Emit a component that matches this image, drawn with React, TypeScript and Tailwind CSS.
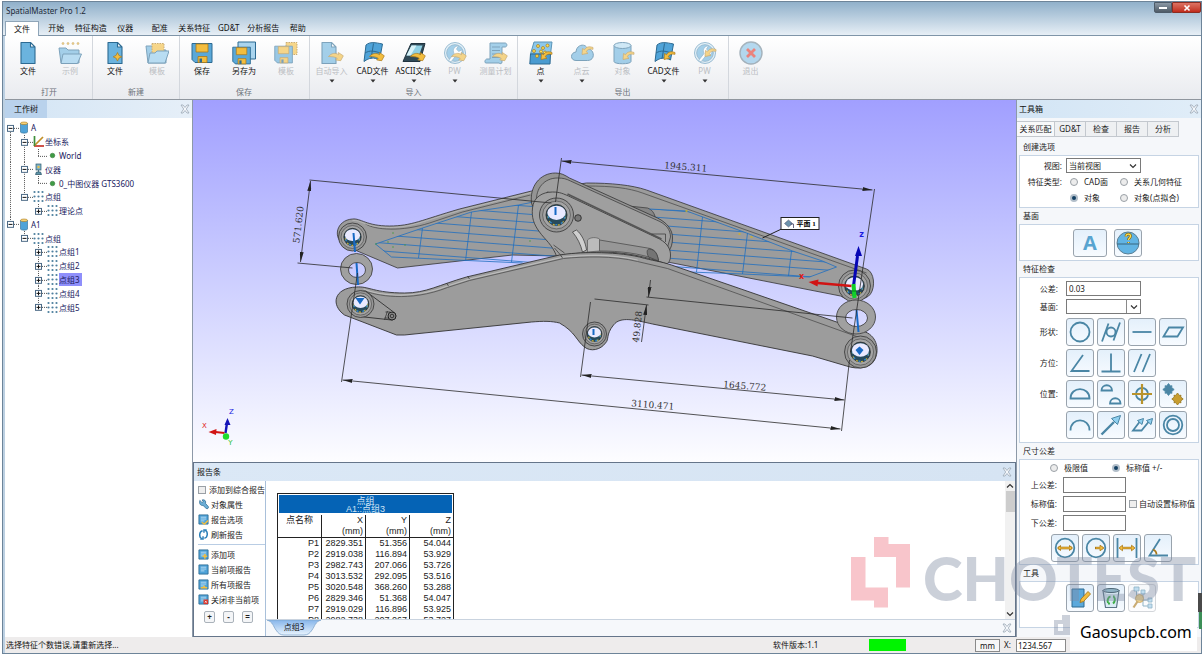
import React, { ReactNode } from "react";

const B = "#6bb3de";
const D = "#2c6a92";
const G = "#f3bd3e";
const GD = "#a9781a";

type Kids = { children?: ReactNode };

const Icon24 = ({ children }: Kids) => (
  <svg viewBox="0 0 24 24" className="h-6 w-6" fill="none" strokeLinejoin="round" aria-hidden="true">
    {children}
  </svg>
);

const OutArrow = () => (
  <path d="M8.500 14.500c3-3.500 7-4 10-1.800l-.2-2.200 5 3.300-2.600 4.900-5-.8 1.500-1.600c-2.500-1.700-5-1.500-8.700-1.800z" fill={G} stroke={GD} strokeWidth=".7" transform="translate(0 1)" />
);
const InArrow = () => (
  <path d="M23 9.500c-4-1.500-7-.5-8.500 2.200l-2-1.200-.5 6 6-1.200-1.800-1.600c1.200-2.300 3-3 6.800-2.400z" fill={G} stroke={GD} strokeWidth=".7" transform="translate(0 2)" />
);

const Doc = () => <path d="M5 1.500h9.500l4.500 4.500v16.500H5z M14.500 1.500V6H19" fill={B} stroke={D} strokeWidth="1.100" />;
const Floppy = () => (
  <>
    <path d="M2 2.500h20v19H5l-3-3z" fill="#5aa8d8" stroke={D} />
    <path d="M6 3h12v8H6z" fill={G} stroke={GD} strokeWidth=".8" />
    <path d="M8 15.500h9v6H8z" fill={G} stroke={GD} strokeWidth=".8" />
    <path d="M9.500 17.500h2.500v4H9.500z" fill={D} />
  </>
);
const Flag = () => (
  <>
    <path d="M5 4c4-3.500 9-2.500 16.500-1l-3 16c-6-3-10-2.500-15.500 1.500z" fill="#4fa3d8" stroke={D} />
    <path d="M12.500 2.500 10 18M4 12c5-3 9-2 15.500 0" stroke={D} />
  </>
);
const Wrench = () => (
  <>
    <circle cx="12" cy="12" r="10.500" fill="#d4e9f5" stroke="#5b94b8" />
    <circle cx="12" cy="12" r="8.300" fill="#6bb3de" stroke="#5b94b8" />
    <path d="M5.500 19.500 11 12.500c-2-4 .8-7.800 4.500-7.700l-2 3.400 2.300 2.200 3.300-1.600c.5 3.600-2.600 6.600-6.100 5.800l-5 6.300z" fill="#fff" stroke="#5b94b8" strokeWidth=".8" />
  </>
);

const icons: Record<string, ReactNode> = {
  doc: <Doc />,
  sample: (
    <>
      {[4, 9, 14, 19].map((x) => (
        <circle key={x} cx={x + 1} cy="2.500" r="1" fill={G} stroke={GD} strokeWidth=".6" />
      ))}
      <path d="M1 7h7l2 2h11v13H3z" fill={B} stroke={D} />
      <path d="M5 13h18.500L19.500 22.500H3z" fill="#8fcbee" stroke={D} />
    </>
  ),
  docNew: (
    <>
      <Doc />
      <path d="M14.500 11.500l1.400 2.900 2.900 1.400-2.900 1.400-1.400 2.900-1.400-2.900-2.900-1.400 2.900-1.400z" fill={G} stroke={GD} strokeWidth=".7" />
    </>
  ),
  folderTpl: (
    <>
      <path d="M1 5h7v4h13v13H3z" fill={B} stroke={D} />
      <path d="M7 2.500h12v10H7z" fill={G} stroke={GD} strokeDasharray="1.500 1" />
      <path d="M5 12h5l2-2h12l-4 12H3z" fill="#8fcbee" stroke={D} />
    </>
  ),
  save: <Floppy />,
  saveAs: (
    <>
      <path d="M6 1h17.500v17H6z" fill="#a9d4ee" stroke={D} />
      <g transform="translate(-1 4) scale(.88)">
        <Floppy />
      </g>
    </>
  ),
  saveTpl: (
    <>
      <path d="M12 1.500h11v12H12z" fill={G} stroke={GD} strokeDasharray="1.500 1" />
      <g transform="translate(-1 3) scale(.88)">
        <Floppy />
      </g>
    </>
  ),
  autoIn: (
    <>
      <g transform="translate(-3 0)">
        <Doc />
      </g>
      <OutArrow />
    </>
  ),
  cadIn: (
    <>
      <Flag />
      <OutArrow />
    </>
  ),
  asciiIn: (
    <>
      <path d="M9 2.500h14l-5 18H1z" fill="#2f4957" stroke="#20333f" />
      <path d="M9.500 4.500h11l-3.500 10H4.500z" fill="#8fd0e4" />
      <path d="M9.500 4.500h5l-6 10h-4z" fill="#d8f2f8" />
      <OutArrow />
    </>
  ),
  pwIn: (
    <>
      <Wrench />
      <OutArrow />
    </>
  ),
  plan: (
    <>
      <path d="M6 2h15c2.500 0 2.500 4 0 4h-3v15c0 2-2 2-3 1H2c-2 0-1-4 1-4h3z" fill={B} stroke={D} />
      <path d="M8 6h8M8 9.500h8M8 13h8M8 16.500h8" stroke={D} />
      <OutArrow />
    </>
  ),
  points: (
    <>
      <path d="M5 1h18l-1.500 12H1.500z" fill="#8cc8ea" stroke="#5b94b8" />
      <path d="M1.500 13h20l-.5 10H.8z" fill="#4a9bd0" stroke="#2c6a92" />
      {[
        [9, 5],
        [14, 7],
        [18.500, 4.500],
        [5, 10],
        [12, 10.500],
        [8, 15],
        [16, 11.500],
      ].map(([x, y]) => (
        <circle key={x + "-" + y} cx={x} cy={y} r="1.500" fill="#ffe14f" stroke={GD} strokeWidth=".7" />
      ))}
      <InArrow />
    </>
  ),
  cloud: (
    <>
      <path d="M6 19.500c-6 0-6-8 0-8.500C6.500 3 16 2 17.500 8c7-.5 8.500 11.500 0 11.500z" fill={B} stroke={D} />
      <g transform="translate(0 -5)">
        <InArrow />
      </g>
    </>
  ),
  object: (
    <>
      <path d="M3 4.500v16c0 3 17 3 17 0v-16" fill={B} stroke={D} />
      <ellipse cx="11.500" cy="4.500" rx="8.500" ry="3" fill="#b2dbf2" stroke={D} />
      <InArrow />
    </>
  ),
  cadOut: (
    <>
      <Flag />
      <InArrow />
    </>
  ),
  pwOut: (
    <>
      <Wrench />
      <g transform="translate(0 -3)">
        <InArrow />
      </g>
    </>
  ),
  exit: (
    <>
      <circle cx="12" cy="12" r="11" fill="#86c1e6" stroke="#6d8493" strokeWidth="1.400" />
      <path d="M8 8l8 8M16 8l-8 8" stroke="#e2352a" strokeWidth="2.800" />
    </>
  ),
};

type Item = { icon: string; label: string; off?: boolean; more?: boolean };
const ribbon: { name: string; pad: string; items: Item[] }[] = [
  { name: "打开", pad: "pl-0.5 pr-px", items: [{ icon: "doc", label: "文件" }, { icon: "sample", label: "示例", off: true }] },
  { name: "新建", pad: "px-px", items: [{ icon: "docNew", label: "文件" }, { icon: "folderTpl", label: "模板", off: true }] },
  {
    name: "保存",
    pad: "pl-px pr-0.5",
    items: [
      { icon: "save", label: "保存" },
      { icon: "saveAs", label: "另存为" },
      { icon: "saveTpl", label: "模板", off: true },
    ],
  },
  {
    name: "导入",
    pad: "px-px",
    items: [
      { icon: "autoIn", label: "自动导入", off: true, more: true },
      { icon: "cadIn", label: "CAD文件", more: true },
      { icon: "asciiIn", label: "ASCII文件", more: true },
      { icon: "pwIn", label: "PW", off: true, more: true },
      { icon: "plan", label: "测量计划", off: true },
    ],
  },
  {
    name: "导出",
    pad: "pl-0.5 pr-[3px]",
    items: [
      { icon: "points", label: "点", more: true },
      { icon: "cloud", label: "点云", off: true, more: true },
      { icon: "object", label: "对象", off: true },
      { icon: "cadOut", label: "CAD文件", more: true },
      { icon: "pwOut", label: "PW", off: true, more: true },
    ],
  },
  { name: "", pad: "px-px", items: [{ icon: "exit", label: "退出", off: true }] },
];

const Ribbon = () => (
  <div className="flex h-16 shrink-0 border-b border-[#8f969e] bg-linear-to-b from-white to-[#e9ebef]">
    {ribbon.map((g, i) => (
      <div key={i} className={"flex flex-col pt-[5px] pb-px " + g.pad + (i < 5 ? " border-r border-[#d3d7dd]" : "")}>
        <div className="flex flex-1">
          {g.items.map((it, k) => (
            <button key={k} disabled={it.off} className={i > 2 ? "flex w-[41px] flex-col items-center" : "flex w-[42px] flex-col items-center"}>
              <span className={it.off ? "opacity-60" : ""}>
                <Icon24>{icons[it.icon]}</Icon24>
              </span>
              <span className={it.off ? "leading-3 whitespace-nowrap text-[#bbbec3]" : "leading-3 whitespace-nowrap text-[#111]"}>{it.label}</span>
              {it.more && (
                <svg viewBox="0 0 6 4" className="mt-0.5 h-1 w-1.5" aria-hidden="true">
                  <path d="M.5 .5h5L3 3.500z" fill="#333" />
                </svg>
              )}
            </button>
          ))}
        </div>
        <div className="h-3 text-center leading-3 text-[#6c727a]">{g.name}</div>
      </div>
    ))}
  </div>
);

const PanelX = () => (
  <button aria-label="关闭" className="flex">
    <svg viewBox="0 0 10 10" className="h-2.5 w-2.5" fill="#f6f9fc" stroke="#9aa7b5" strokeWidth=".8" aria-hidden="true">
      <path d="M1 1h2l2 2.500L7 1h2L6.300 5 9 9H7L5 6.500 3 9H1l2.700-4z" />
    </svg>
  </button>
);

/* ---------- work tree ---------- */

const dash = { stroke: "#555", strokeDasharray: "1 1", strokeWidth: 1 };
const Cell = ({ t }: { t: string }) => (
  <svg viewBox="0 0 14 14" preserveAspectRatio="none" className="h-full w-3.5 shrink-0" fill="none" aria-hidden="true">
    {"vmpt".includes(t) && <path d={t === "t" ? "M5.500 7v7" : "M5.500 0v14"} {...dash} />}
    {"eMPE".includes(t) && <path d="M5.500 0v7" {...dash} />}
    {"mpMPteE".includes(t) && <path d="M5 7.500h9" {...dash} />}
    {"mpMPt".includes(t) && (
      <>
        <rect x="2.500" y="4.500" width="6" height="6" fill="#fff" stroke="#4c6a86" />
        <path d={t === "p" || t === "P" ? "M3.500 7.500h4M5.500 5.500v4" : "M3.500 7.500h4"} stroke="#111" />
      </>
    )}
  </svg>
);

const treeIcons: Record<string, ReactNode> = {
  db: (
    <>
      <path d="M1.500 2v9c0 1.500 7 1.500 7 0V2" fill="#4fa3d8" stroke="#2c6a92" strokeWidth=".6" />
      <ellipse cx="5" cy="2.300" rx="3.500" ry="1.300" fill="#f6d27a" stroke="#a9781a" strokeWidth=".6" />
    </>
  ),
  axes: (
    <>
      <path d="M1 11h10" stroke="#c8342b" strokeWidth="1.700" />
      <path d="M1 11 10 2" stroke="#c2902a" strokeWidth="1.700" />
      <path d="M1.500 1v10" stroke="#3f8f3c" strokeWidth="1.700" />
    </>
  ),
  scanner: (
    <>
      <rect x="3" y="1" width="5" height="6" fill="#7fb3c8" stroke="#2f5a6e" strokeWidth=".7" />
      <path d="M5.500 7v2M2.500 11.500l1-2.500h4l1 2.500z" fill="#5f94a8" stroke="#2f5a6e" strokeWidth=".8" />
      <circle cx="5.500" cy="4" r="1.200" fill="#e8c14d" />
    </>
  ),
  bullet: <circle cx="5.500" cy="6.500" r="2.300" fill="#3f9b45" stroke="#2a6d2f" strokeWidth=".5" />,
  dots: (
    <>
      {[1.5, 5.5, 9.5].map((x) =>
        [2, 6.5, 11].map((y) => <circle key={x + "," + y} cx={x} cy={y} r="1.100" fill="#4d7f9e" />)
      )}
    </>
  ),
};

const tree: [string, string, string][] = [
  ["t", "db", "A"],
  ["vm", "axes", "坐标系"],
  ["vve", "bullet", "World"],
  ["vm", "scanner", "仪器"],
  ["vve", "bullet", "0_中图仪器 GTS3600"],
  ["vM", "dots", "点组"],
  ["v P", "dots", "理论点"],
  ["M", "db", "A1"],
  [" M", "dots", "点组"],
  ["  p", "dots", "点组1"],
  ["  p", "dots", "点组2"],
  ["  p", "dots", "点组3"],
  ["  p", "dots", "点组4"],
  ["  P", "dots", "点组5"],
];

const WorkTree = () => (
  <aside className="flex w-[188px] shrink-0 flex-col border-r border-[#8d99a8] bg-white">
    <div className="flex h-[18px] items-center justify-between bg-linear-to-r from-[#d3e5f5] to-[#e6eff8] pr-0.5">
      <h2 className="flex h-full w-[42px] items-center justify-center bg-[#b9d2ec] text-[#111]">工作树</h2>
      <PanelX />
    </div>
    <ul className="mt-[3px] grid h-[193px] auto-rows-fr text-[#20205e]">
      {tree.map(([cells, icon, label], i) => (
        <li key={i} className="flex min-h-0 items-center">
          {cells.split("").map((c, k) => (
            <Cell key={k} t={c} />
          ))}
          <svg viewBox="0 0 12 13" className="h-[13px] w-3 shrink-0" aria-hidden="true">
            {treeIcons[icon]}
          </svg>
          <span className={label === "点组3" ? "bg-[#8f8ffb] pr-0.5 leading-[13px] whitespace-nowrap" : "leading-[13px] whitespace-nowrap"}>{label}</span>
        </li>
      ))}
    </ul>
  </aside>
);

/* ---------- 3D view ---------- */

const Bore = ({ x, y, r }: { x: number; y: number; r: number }) => (
  <g>
    <circle cx={x} cy={y} r={r} fill="#969696" stroke="#333" strokeWidth=".8" />
    <circle cx={x} cy={y} r={r * 0.82} fill="#a4a4a4" stroke="#444" strokeWidth=".6" />
    <circle cx={x} cy={y} r={r * 0.62} fill="#274a5c" stroke="#222" strokeWidth=".7" />
    <circle cx={x} cy={y + r * 0.1} r={r * 0.5} fill="none" stroke="#c8b23a" strokeWidth="1.200" strokeDasharray="2 3" />
    <circle cx={x} cy={y + r * 0.1} r={r * 0.48} fill="none" stroke="#2f86c9" strokeWidth="1.500" strokeDasharray="2 4" />
    <ellipse cx={x} cy={y - r * 0.13} rx={r * 0.54} ry={r * 0.42} fill="#e9e9ff" />
  </g>
);

const Viewport = () => (
  <div className="min-h-0 flex-1 bg-linear-to-b from-[#a19fff] to-[#fdfdff]">
    <svg viewBox="194 100 822 362" className="h-full w-full" fill="none" role="img" aria-label="三维视图">
      <defs>
        <marker id="arr" viewBox="0 0 10 4" refX="10" refY="2" markerWidth="10" markerHeight="4" markerUnits="userSpaceOnUse" orient="auto-start-reverse">
          <path d="M0 0 10 2 0 4z" fill="#222" />
        </marker>
        <clipPath id="hatchL">
          <path d="M376 244 423 228 472 212 519 205 545 200 562 256 523 263 392 257z" />
        </clipPath>
        <clipPath id="hatchR">
          <path d="M650 209 687 211 747 233 793 251 823 261 837 267 810 277 743 274 690 272 655 258z" />
        </clipPath>
      </defs>

      {/* rear arm */}
      <path
        d="M353 219c8-1 14 7 37 7 22 0 32-6 70-17l72-18 55-8c25 0 45 2 60 7l220 79c8 3 9 18 4 25-4 6-20 9-30 2L668 262l-110-6-45-1-115 13-52-22c-14-8-9-26 7-27z"
        fill="#9c9c9c"
        stroke="#333"
        strokeWidth=".8"
      />
      <path d="M366 224c10 6 36 8 64-1l33-11 68-17M587 186c26 0 42 2 56 7l224 80" stroke="#444" strokeWidth=".7" />
      <path d="M353 219c8-1 14 7 37 7 22 0 32-6 70-17l72-18" stroke="#b8b8b8" strokeWidth=".9" transform="translate(0 1.500)" />
      <path d="M610 204 648 208c6 2 8 8 8 12" stroke="#333" strokeWidth=".7" fill="#858585" />
      <g stroke="#1f6fc0" strokeWidth=".8">
        <path d="M376 244 423 228 472 212 519 205 534 202M376 244l16 13 131 6M650 209l37 2 60 22 46 18 30 10 14 6-27 10-67-3-53-2" />
        <path d="M423 228l-4 30M472 212l-6 49M519 205l-7 57M703 217l-6 55M748 233l-5 41M792 251l-3 25" />
        <g clipPath="url(#hatchL)">
          {[0, 1, 2, 3, 4, 5, 6, 7].map((i) => (
            <path key={i} d={`M370 ${194 + i * 8}l195 15`} />
          ))}
        </g>
        <g clipPath="url(#hatchR)">
          {[0, 1, 2, 3, 4, 5, 6, 7, 8].map((i) => (
            <path key={i} d={`M640 ${200 + i * 8}l200 15`} />
          ))}
        </g>
      </g>
      <path d="M376 244h1M393 247h1M405 245h1M393 233h1M388 242h1M530 241h1" stroke="#3e9b3a" strokeWidth="1.300" />
      <path d="M686 211h2M739 234h2M751 237h2" stroke="#d1b31f" strokeWidth="1.300" />
      <Bore x={353} y={237} r={14} />
      <Bore x={855} y={286} r={16} />

      {/* link plates */}
      <path
        d="M532 203c-2-16 8-30 24-30 6 0 9 2 14 5l88 40c10 5 15 12 15 20 0 12-6 17-12 17l-90-35-38-14z"
        fill="#949494"
        stroke="#333"
        strokeWidth=".8"
      />
      <path d="M537 202c-1-14 8-24 21-24 6 0 9 1 13 3l86 39c10 4 14 10 14 17l-3 10-100-50-20-5z" fill="#9f9f9f" stroke="#333" strokeWidth=".7" />
      <path
        d="M533 208c1-11 10-16 20-16 8 0 11 2 16 4l91 43c9 5 11 11 11 16 0 6-2 8-4 9-22-8-42-12-67-12-15 0-28 2-43 4-4-11-12-17-17-24-6-8-8-15-7-24z"
        fill="#a0a0a0"
        stroke="#333"
        strokeWidth=".8"
      />
      <path d="M568 194l94 45" stroke="#555" strokeWidth="1.400" />
      <path d="M652 234h14v8" stroke="#333" strokeWidth=".7" />
      <path d="M600 240l48 8c7 1 9 4 11 12-20-7-39-9-59-9z" fill="#979797" stroke="#444" strokeWidth=".7" />
      <path d="M650 249c-3 0-3 4-1 8l10 4c-1-7-3-11-9-12z" fill="#747474" stroke="#333" strokeWidth=".6" />
      <path d="M588 240c3-3 9-3 12-1v12l-12 1z" fill="#bbb" stroke="#555" strokeWidth=".7" />
      <path d="M573 232l4-2c5 4 9 12 10 20l-4 2c-2-8-5-14-10-20z" fill="#cfcfcf" stroke="#333" strokeWidth=".7" />
      <path d="M554 245l11 8M555 248l6 7" stroke="#333" strokeWidth=".7" />
      <Bore x={557} y={215} r={17} />
      <circle cx="578.500" cy="218" r="3.300" fill="#777" stroke="#222" strokeWidth=".8" />

      {/* front arm */}
      <path
        d="M357 287c12-1 18 6 48 6 22 0 34-8 62-16l93-22c18-3 53-4 80 2 14 4 20 4 32 8l194 67c12 5 14 19 9 28-4 8-16 10-28 6l-34-10-160-32c-18-4-32-8-39 1-8 10-4 14-8 18-5 7-15 9-21 4-8-6-9-15-25-24-8-2-16-2-28-1l-127 13h-8l-52-20c-14-10-11-27 12-28z"
        fill="#9c9c9c"
        stroke="#333"
        strokeWidth=".9"
      />
      <path d="M364 289c12 5 46 12 84-3l22-7 94-22c20-2 50-3 74 3" stroke="#bdbdbd" strokeWidth="1.200" />
      <path d="M364 290.500c12 5 46 12 84-3l22-7 94-22c20-2 50-3 74 3l30 7 192 69" stroke="#444" strokeWidth=".7" />
      <path d="M468 276l2 3M447 283l2 3M561 255l2 3" stroke="#333" strokeWidth=".7" />
      <path d="M366 291l28 21c4 3 2 8-2 8l-36-4" fill="#9c9c9c" stroke="#222" strokeWidth=".8" />
      <path d="M386 312h5M385 318h5M388 311l-3 9" stroke="#333" strokeWidth=".8" />
      <circle cx="392.500" cy="316" r="4" fill="#8a8a8a" stroke="#222" />
      <circle cx="392.500" cy="316" r="1.800" stroke="#222" strokeWidth=".8" />
      <Bore x={361} y={304} r={13.500} />
      <Bore x={595} y={334} r={12} />
      <Bore x={861} y={352} r={16} />

      {/* washers */}
      <g fill="#a0a0a0" stroke="#444" strokeWidth=".9" fillRule="evenodd">
        <path d="M341 269a16 15.500 0 1 0 32 0a16 15.500 0 1 0-32 0zM349 270a8.500 7.500 0 1 0 17 0a8.500 7.500 0 1 0-17 0z" />
        <path d="M837 317a19.500 17 0 1 0 39 0a19.500 17 0 1 0-39 0zM846 318a11 8.500 0 1 0 22 0a11 8.500 0 1 0-22 0z" />
      </g>

      {/* fitted axes */}
      <g stroke="#1769c5" strokeWidth="2">
        <path d="M354 233l1.500 19M357 263l1.500 22M556 207v8M594 329v6M857 310l2 22" />
      </g>
      <path d="M356 298h9l-4.500 6.500zM856 350l4-3.500 4 3.500-4 5z" fill="#1769c5" />

      {/* dimensions */}
      <g stroke="#2a2a2a" strokeWidth=".8">
        <path d="M310 180 552 203M298 263l55 5M562 158l-6 44M875 189 851 352M850 360l-8 71M358 273 342 382M591 302l-10 75M595 299l54 6M647 297l206 21" />
        <path d="M311 181 301 262" markerStart="url(#arr)" markerEnd="url(#arr)" />
        <path d="M562 161 873 190" markerStart="url(#arr)" markerEnd="url(#arr)" />
        <path d="M343 380 841 429" markerStart="url(#arr)" markerEnd="url(#arr)" />
        <path d="M582 375 845 400" markerStart="url(#arr)" markerEnd="url(#arr)" />
        <path d="M651 280l-2 17" markerEnd="url(#arr)" />
        <path d="M642 342l5-37" markerEnd="url(#arr)" />
      </g>
      <g className="fill-[#333] font-['DejaVu_Serif',serif] text-[9px]" textAnchor="middle">
        <text transform="translate(302 225) rotate(-83)">571.620</text>
        <text transform="translate(686 170) rotate(5)">1945.311</text>
        <text transform="translate(653 408) rotate(5)">3110.471</text>
        <text transform="translate(745 389) rotate(5)">1645.772</text>
        <text transform="translate(641 327) rotate(-84)">49.828</text>
      </g>

      {/* plane label */}
      <path d="M782 229 763 238" stroke="#222" />
      <rect x="781.500" y="217.500" width="38" height="12" fill="#fff" stroke="#222" />
      <path d="M789 220l4 3.500-4 3.500-4-3.500z" fill="#6d93ad" stroke="#446" strokeWidth=".5" />
      <path d="M791 224h3v4" stroke="#446" strokeWidth=".8" />
      <text x="797" y="226" className="fill-black font-['Liberation_Serif','Noto_Sans_CJK_SC',serif] text-[7px] font-bold">
        平面 1
      </text>

      {/* part axes */}
      <path d="M854 286l4-30" stroke="#0505b5" strokeWidth="3" />
      <path d="M859 246l3.500 10h-7z" fill="#0505b5" />
      <path d="M852 286l-34-3" stroke="#d11414" strokeWidth="2.400" />
      <path d="M809 282l10-2.500-1 7z" fill="#d11414" />
      <path d="M854 284l1 14" stroke="#12cf2a" strokeWidth="4" />
      <path d="M852 291h5" stroke="#0b7a1a" />
      <g className="font-['DejaVu_Sans',sans-serif] text-[8px] font-bold" textAnchor="middle">
        <text x="862" y="237" className="fill-[#1a1ae0]">z</text>
        <text x="802" y="279" className="fill-[#e01a1a]">x</text>
      </g>

      {/* view axes */}
      <path d="M226 433l1.500-10" stroke="#1414b8" strokeWidth="2.400" />
      <path d="M228 418l3 7h-6z" fill="#1414b8" />
      <path d="M225 433l-9-1" stroke="#d11414" strokeWidth="2" />
      <path d="M209 432l8-3-.5 6z" fill="#d11414" />
      <circle cx="226.500" cy="436.500" r="3.200" fill="#1fdc2c" />
      <g className="font-['DejaVu_Sans',sans-serif] text-[7px]" textAnchor="middle">
        <text x="232" y="414" className="fill-[#1a1ae0]">Z</text>
        <text x="205" y="428" className="fill-[#e01a1a]">X</text>
        <text x="231" y="445" className="fill-[#1fbf2c]">Y</text>
      </g>
    </svg>
  </div>
);

/* ---------- report ---------- */

const Sheet = ({ children }: Kids) => (
  <>
    <path d="M1 1h10v10H1z" fill="#4fa3d8" stroke="#2c6a92" strokeWidth=".9" />
    <path d="M3 3.500h6M3 5.500h6M3 7.500h4" stroke="#d6ecf9" strokeWidth=".8" />
    {children}
  </>
);
const reportIcons: ReactNode[] = [
  <path key="w" d="M2 1.500l2.500 2.500 1.200-1L4.500 1c3-.8 4.500 1.500 3.700 3.800l3 3.400c1 1.500-1 3.300-2.400 2L5.500 7C3 7.600.8 5 2 1.500z" fill="#6baed6" stroke="#2c6a92" strokeWidth=".8" />,
  <Sheet key="o"><path d="M4 9l3 2 4-4" stroke={G} strokeWidth="1.500" /></Sheet>,
  <path key="r" d="M5 2C1 3 1 9 4 10.500M2.500 10.800h3V8M7 10c4-1 4-7 1-8.500M9.500 1.200h-3V4" stroke="#2b7fb8" strokeWidth="1.600" />,
  <Sheet key="a"><path d="M7.500 5.500v5M5 8h5" stroke={G} strokeWidth="1.600" /></Sheet>,
  <Sheet key="c" />,
  <Sheet key="l"><path d="M3 9.500h7M6 7.500l2 2" stroke={G} strokeWidth="1.600" /></Sheet>,
  <Sheet key="x"><path d="M6 6h5v5H6z" fill="#d9362c" /><path d="M7.500 7.500l2 2M9.500 7.500l-2 2" stroke="#fff" strokeWidth=".8" /></Sheet>,
];
const ReportAction = ({ n, label }: { n: number; label: string }) => (
  <button className="flex h-[15px] items-center gap-0.5 whitespace-nowrap">
    <svg viewBox="0 0 12 12" className="h-[11px] w-[11px]" fill="none" aria-hidden="true">
      {reportIcons[n]}
    </svg>
    {label}
  </button>
);

const rows = [
  ["P1", "2829.351", "51.356", "54.044"],
  ["P2", "2919.038", "116.894", "53.929"],
  ["P3", "2982.743", "207.066", "53.726"],
  ["P4", "3013.532", "292.095", "53.516"],
  ["P5", "3020.548", "368.260", "53.288"],
  ["P6", "2829.346", "51.368", "54.047"],
  ["P7", "2919.029", "116.896", "53.925"],
  ["P8", "2982.738", "207.067", "53.727"],
];

const Chevron = ({ up }: { up?: boolean }) => (
  <svg viewBox="0 0 8 6" className="h-1.5 w-2" fill="none" stroke="#333" strokeWidth="1.200" aria-hidden="true">
    <path d={up ? "M1 4.500 4 1.500l3 3" : "M1 1.500l3 3 3-3"} />
  </svg>
);

const Report = () => (
  <section className="flex h-[175px] shrink-0 flex-col border border-[#65758a] bg-white">
    <div className="flex h-[18px] shrink-0 items-center justify-between bg-linear-to-r from-[#dbe8f6] to-[#d6e4f3] px-[3px] text-[#111]">
      <h2>报告条</h2>
      <PanelX />
    </div>
    <div className="flex min-h-0 flex-1">
      <div className="w-[72px] shrink-0 overflow-hidden border-r border-[#a9c0da] pt-px pl-1 text-[#222]">
        <label className="flex h-[15px] items-center gap-[3px] whitespace-nowrap">
          <input type="checkbox" className="h-2 w-2 shrink-0 appearance-none border border-[#9aa0a6] bg-[#eee]" />
          添加到综合报告
        </label>
        <ReportAction n={0} label="对象属性" />
        <ReportAction n={1} label="报告选项" />
        <ReportAction n={2} label="刷新报告" />
        <div className="my-0.5 h-px bg-[#b9cde4]" />
        <ReportAction n={3} label="添加项" />
        <ReportAction n={4} label="当前项报告" />
        <ReportAction n={5} label="所有项报告" />
        <ReportAction n={6} label="关闭非当前项" />
        <div className="mt-1 flex gap-2 pl-1.5">
          {["+", "-", "="].map((s) => (
            <button key={s} className="h-3 w-[11px] rounded-xs border border-[#aab2ba] bg-[#f4f5f7] leading-2 font-bold">
              {s}
            </button>
          ))}
        </div>
      </div>
      <div className="flex min-w-0 flex-1 flex-col">
        <div className="flex min-h-0 flex-1">
          <div className="min-w-0 flex-1 overflow-hidden pt-3 pl-[11px]">
            <table className="w-[177px] table-fixed border-collapse border border-[#222] font-['Liberation_Sans','Noto_Sans_CJK_SC',sans-serif] text-[9px] leading-[11px] text-[#222]">
              <thead>
                <tr>
                  <th colSpan={4} className="px-px pt-px pb-0.5 font-normal">
                    <div className="bg-[#0563b5] pt-0.5 leading-2 text-[#cfe3f5]">
                      点组
                      <br />
                      A1::点组3
                    </div>
                  </th>
                </tr>
                <tr className="border-b border-[#222]">
                  <th className="h-[22px] pl-2 text-left align-top font-normal">点名称</th>
                  {["X", "Y", "Z"].map((h) => (
                    <th key={h} className="border-l border-[#222] pr-0.5 text-right font-normal">
                      {h}
                      <br />
                      (mm)
                    </th>
                  ))}
                </tr>
              </thead>
              <tbody>
                {rows.map((r) => (
                  <tr key={r[0]}>
                    {r.map((c, i) => (
                      <td key={i} className={i ? "h-[11px] border-l border-[#222] p-0 pr-0.5 text-right" : "h-[11px] p-0 pr-0.5 text-right"}>
                        {c}
                      </td>
                    ))}
                  </tr>
                ))}
              </tbody>
            </table>
          </div>
          <div className="flex w-2.5 flex-col items-center bg-[#f1f1f1] py-0.5">
            <Chevron up />
            <div className="mt-0.5 h-[21px] w-[9px] bg-[#cdcdcd]" />
            <div className="flex-1" />
            <Chevron />
          </div>
        </div>
        <div className="flex h-[17px] shrink-0 items-center justify-between border-t border-[#c9d3df] bg-[#f6f8fb] pr-[3px]">
          <button className="relative ml-px flex h-4 w-[54px] items-start justify-center pt-px text-[#111]">
            <svg viewBox="0 0 54 16" className="absolute inset-0 h-full w-full" aria-hidden="true">
              <defs>
                <linearGradient id="tabFill" x1="0" y1="0" x2="0" y2="1">
                  <stop offset="0" stopColor="#86b5ea" />
                  <stop offset="1" stopColor="#e8f3fd" />
                </linearGradient>
              </defs>
              <path d="M0 0h54c-6 2-6 6-9 10-2 3-4 5-8 5H17c-4 0-6-2-8-5C6 6 6 2 0 0z" fill="url(#tabFill)" stroke="#7fa5cc" strokeWidth=".8" />
            </svg>
            <span className="relative leading-3">点组3</span>
          </button>
          <PanelX />
        </div>
      </div>
    </div>
  </section>
);

/* ---------- toolbox ---------- */

const T = "#4a86a5";
const tools: Record<string, ReactNode> = {
  circle: <circle cx="12" cy="12" r="9.500" />,
  cylindricity: (
    <>
      <circle cx="12" cy="12" r="4.500" />
      <path d="M3 21.500 9.500 3.500M14.500 20.500 21 2.500" />
    </>
  ),
  line: <path d="M2.500 12h19" />,
  parallelogram: <path d="M8 7.500h14l-5.500 9H2.500z" />,
  angle: <path d="M15 4 3.500 20H21.500" />,
  perp: <path d="M12 2.500V20M2.500 20.500h19" />,
  parallel: <path d="M4 21 11.500 3M12.500 21 20 3" />,
  profile: <path d="M2.500 16.500h19c0-12.500-19-12.500-19 0z" />,
  profiles: <path d="M2.500 8.500h10.500c0-7-10.500-7-10.500 0zM11 21.500h10.500c0-7-10.500-7-10.500 0z" />,
  position: (
    <>
      <circle cx="12" cy="12" r="6" />
      <path d="M12 2v20M2 12h20" stroke="#b8932c" strokeWidth="2.200" />
    </>
  ),
  stars: (
    <>
      <path d="M7.500 1.500l2 2.500 1.500-.3-.3 1.800 2.500 2-2.500 2 .3 1.800-1.500-.3-2 2.500-2-2.500-1.500.3.300-1.800-2.500-2 2.500-2-.3-1.800 1.500.3z" fill={T} strokeWidth=".8" />
      <path d="M16.500 11l2 2.500 1.500-.3-.3 1.800 2.500 2-2.500 2 .3 1.800-1.500-.3-2 2.500-2-2.500-1.500.3.300-1.800-2.500-2 2.500-2-.3-1.800 1.500.3z" fill="#c79d2f" stroke="#96731a" strokeWidth=".8" />
    </>
  ),
  arc: <path d="M2.500 17.500c0-13.500 19-13.500 19 0" />,
  runout: (
    <>
      <path d="M2.500 21.500 15 9" strokeWidth="2.400" />
      <path d="M21.500 2.500l-3 9-6-6z" fill="#8fd0f0" strokeWidth="1" />
    </>
  ),
  totalRunout: (
    <>
      <path d="M9.500 9 3 17.500h8.500L18.500 9" strokeWidth="1.800" />
      <path d="M13.500 5.500l-1.500 6-4.500-4zM22.500 5.500l-1.500 6-4.500-4z" fill="#8fd0f0" strokeWidth="1" />
    </>
  ),
  concentric: (
    <>
      <circle cx="12" cy="12" r="9.300" />
      <circle cx="12" cy="12" r="6" />
    </>
  ),
  diameter: (
    <>
      <circle cx="12" cy="12" r="9.300" />
      <path d="M5 12h14" stroke={GD} strokeWidth="2.600" />
      <path d="M4.500 12l3-2.500v5zM19.500 12l-3-2.500v5z" fill={G} stroke={GD} strokeWidth=".9" />
      <path d="M7 12h10" stroke={G} strokeWidth="1.200" />
    </>
  ),
  radius: (
    <>
      <circle cx="12" cy="12" r="9.300" />
      <path d="M11 12h8" stroke={GD} strokeWidth="2.400" />
      <path d="M20 12l-4-2.800v5.600z" fill={G} stroke={GD} strokeWidth=".8" />
      <path d="M12 12h5" stroke={G} strokeWidth="1" />
    </>
  ),
  distance: (
    <>
      <path d="M2.500 2v20M21.500 2v20" />
      <path d="M5 12h14" stroke={GD} strokeWidth="2.400" />
      <path d="M4 12l3.500-2.800v5.600zM20 12l-3.500-2.800v5.600z" fill={G} stroke={GD} strokeWidth=".8" />
      <path d="M7 12h10" stroke={G} strokeWidth="1" />
    </>
  ),
  angleDim: (
    <>
      <path d="M14 3 3.500 19.500h18.500" />
      <path d="M7 13.500c2.500 1 3.500 2.500 3.500 5" stroke={GD} strokeWidth="1.800" />
    </>
  ),
  sphere: (
    <>
      <circle cx="12" cy="12" r="11" fill="#62b4e3" stroke="#5c7f93" strokeWidth="1" />
      <path d="M1 13h22" stroke="#38667f" strokeWidth="1" />
      <path d="M10 5.500c0-3.500 5-3 4.500 0-.3 1.500-2 1.500-2 3.500M12.500 11v1" stroke="#8a6c14" strokeWidth="2.800" />
      <path d="M10 5.500c0-3.500 5-3 4.500 0-.3 1.500-2 1.500-2 3.500M12.500 11v1" stroke="#ffdf4d" strokeWidth="1.300" />
    </>
  ),
  edit: (
    <>
      <path d="M4 3h12v18H4z" fill="#5ba9dc" stroke="#2c6a92" strokeWidth="1" />
      <path d="M12 16.500l1-3.500L20 5.500l2.500 2.500-7 7.500z" fill={G} stroke={GD} strokeWidth=".9" />
    </>
  ),
  recycle: (
    <>
      <path d="M4 4.500h16l-2.500 17h-11z" fill="#d9ebf4" stroke="#5a7484" strokeWidth="1.200" />
      <ellipse cx="12" cy="4.500" rx="8" ry="2" fill="#8fb2c4" stroke="#4f6877" strokeWidth="1" />
      <path d="M9 17c-1-2.500 0-6 2.500-6.500M15 11c1.500 2 1 5-1 6.500M11 17.500H9M14 10.500h1.500" stroke="#3fae49" strokeWidth="2" />
    </>
  ),
  keyTree: (
    <g opacity=".6">
      <path d="M6.500 5v7M13 7v13h5M13 14h5" strokeWidth="1" />
      <path d="M4 1h5v4H4zM11 4h4v4h-4zM18 12h4v4h-4zM18 18h4v4h-4z" fill="#9ccbe8" strokeWidth=".8" />
      <circle cx="9.500" cy="12.500" r="4" fill={G} stroke={GD} strokeWidth="1" />
      <path d="M7.500 15.500l-4 6" stroke={GD} strokeWidth="2.200" />
    </g>
  ),
};

const ToolButton = ({ name, label, wide, off }: { name: string; label: string; wide?: boolean; off?: boolean }) => (
  <button
    aria-label={label}
    disabled={off}
    className={
      "flex h-7 items-center justify-center rounded-[3px] border bg-linear-to-b " +
      (off ? "border-[#d3d6da] from-[#f6f8fa] to-[#fdfdfe] " : "border-[#99a3ad] from-[#e4f0fb] to-[#f7fbff] ") +
      (wide ? "w-[34px]" : "w-7")
    }
  >
    {wide ? (
      <span className="font-['Open_Sans',sans-serif] text-[20px] leading-6 font-bold text-[#58a4d0]">A</span>
    ) : (
      <svg viewBox="0 0 24 24" className="h-6 w-6" fill="none" stroke={T} strokeWidth="1.800" aria-hidden="true">
        {tools[name]}
      </svg>
    )}
  </button>
);

const Box = ({ title, children }: { title: string; children: ReactNode }) => (
  <section>
    <h3 className="h-4 pt-0.5 pl-1 leading-3 text-[#222]">{title}</h3>
    <div className="border border-[#c6d4e4] bg-white">{children}</div>
  </section>
);

const radioCls =
  "h-2 w-2 shrink-0 appearance-none rounded-full border border-[#9aa0a6] bg-[#ececec] checked:border-2 checked:border-[#b3bfca] checked:bg-[#123f63]";
const Radio = ({ name, label, on }: { name: string; label: string; on?: boolean }) => (
  <label className="flex h-4 items-center gap-1.5 whitespace-nowrap">
    <input type="radio" name={name} defaultChecked={on} className={radioCls} />
    {label}
  </label>
);

const field = "border border-[#7a7a7a] bg-white px-0.5 outline-none";
const ToolRow = ({ label, items }: { label: string; items: [string, string][] }) => (
  <div className="flex items-center gap-2">
    <span className="w-[38px] text-right">{label}</span>
    <div className="flex gap-[3px]">
      {items.map(([n, l]) => (
        <ToolButton key={n} name={n} label={l} />
      ))}
    </div>
  </div>
);

const Toolbox = () => (
  <aside className="flex w-[185px] shrink-0 flex-col border-l border-[#8d99a8] bg-[#f5f7fa] text-[#222]">
    <div className="flex h-[18px] items-center justify-between bg-linear-to-r from-[#d3e5f5] to-[#e0edf8] px-0.5 text-[#111]">
      <h2>工具箱</h2>
      <PanelX />
    </div>
    <div className="mt-[3px] flex h-4">
      {["关系匹配", "GD&T", "检查", "报告", "分析"].map((t, i) => (
        <button
          key={t}
          className={
            "flex items-center justify-center border-t border-r border-b border-[#c3c8ce] whitespace-nowrap " +
            (i ? "w-[31px] bg-[#eef0f2]" : "w-[38px] bg-[#f8f9fa]")
          }
        >
          {t}
        </button>
      ))}
    </div>
    <div className="mt-0.5 flex flex-col px-0.5">
      <Box title="创建选项">
        <div className="flex flex-col py-px">
          <div className="flex h-[17px] items-center gap-1">
            <label htmlFor="view" className="w-[42px] text-right">
              视图:
            </label>
            <div className="relative">
              <select id="view" className="block h-[15px] w-[75px] appearance-none border border-[#7a7a7a] bg-white pl-0.5 leading-3">
                <option>当前视图</option>
              </select>
              <span className="pointer-events-none absolute inset-y-0 right-1 flex items-center">
                <Chevron />
              </span>
            </div>
          </div>
          <div className="flex gap-2">
            <span className="w-[42px] text-right leading-4 whitespace-nowrap">特征类型:</span>
            <div className="grid grid-cols-[50px_1fr]">
              <Radio name="kind" label="CAD面" />
              <Radio name="kind" label="关系几何特征" />
              <Radio name="kind" label="对象" on />
              <Radio name="kind" label="对象(点拟合)" />
            </div>
          </div>
        </div>
      </Box>
      <Box title="基面">
        <div className="flex gap-[7px] pt-1 pb-[3px] pl-[53px]">
          <ToolButton name="datumA" label="基准 A" wide />
          <ToolButton name="sphere" label="查询基准" />
        </div>
      </Box>
      <Box title="特征检查">
        <div className="flex flex-col gap-[3px] py-[3px]">
          <div className="flex items-center gap-2">
            <label htmlFor="tol" className="w-[38px] text-right">
              公差:
            </label>
            <input id="tol" defaultValue="0.03" className={field + " h-[15px] w-[75px]"} />
          </div>
          <div className="mb-px flex items-center gap-2">
            <label htmlFor="datum" className="w-[38px] text-right">
              基面:
            </label>
            <div className="relative">
              <select id="datum" className="block h-[15px] w-[75px] appearance-none border border-[#7a7a7a] bg-white">
                <option></option>
              </select>
              <span className="pointer-events-none absolute inset-y-px right-px flex w-3.5 items-center justify-center border-l border-[#8a8a8a]">
                <Chevron />
              </span>
            </div>
          </div>
          <ToolRow label="形状:" items={[["circle", "圆度"], ["cylindricity", "圆柱度"], ["line", "直线度"], ["parallelogram", "平面度"]]} />
          <ToolRow label="方位:" items={[["angle", "倾斜度"], ["perp", "垂直度"], ["parallel", "平行度"]]} />
          <ToolRow label="位置:" items={[["profile", "面轮廓度"], ["profiles", "组合轮廓度"], ["position", "位置度"], ["stars", "组合位置度"]]} />
          <ToolRow label="" items={[["arc", "线轮廓度"], ["runout", "圆跳动"], ["totalRunout", "全跳动"], ["concentric", "同心度"]]} />
        </div>
      </Box>
      <Box title="尺寸公差">
        <div className="flex flex-col pb-0.5">
          <div className="grid h-[17px] grid-cols-[62px_1fr] pl-[30px]">
            <Radio name="tolKind" label="极限值" />
            <Radio name="tolKind" label="标称值 +/-" on />
          </div>
          <div className="flex flex-col gap-[3px]">
            {["上公差:", "标称值:", "下公差:"].map((l, i) => (
              <div key={l} className="flex items-center">
                <label htmlFor={"size" + i} className="w-[37px] text-right">
                  {l}
                </label>
                <input id={"size" + i} className={field + " ml-1.5 h-4 w-[63px]"} />
                {i === 1 && (
                  <label className="ml-[3px] flex items-center gap-0.5 whitespace-nowrap">
                    <input type="checkbox" className="h-2 w-2 shrink-0 appearance-none border border-[#9aa0a6] bg-[#eee]" />
                    自动设置标称值
                  </label>
                )}
              </div>
            ))}
          </div>
          <div className="mt-[3px] flex gap-[3px] pl-[31px]">
            <ToolButton name="diameter" label="直径" />
            <ToolButton name="radius" label="半径" />
            <ToolButton name="distance" label="距离" />
            <ToolButton name="angleDim" label="角度" />
          </div>
        </div>
      </Box>
      <Box title="工具">
        <div className="flex gap-[3px] pt-0.5 pb-[15px] pl-[46px]">
          <ToolButton name="edit" label="编辑" />
          <ToolButton name="recycle" label="回收" />
          <ToolButton name="keyTree" label="权限" off />
        </div>
      </Box>
    </div>
  </aside>
);

/* ---------- window ---------- */

const TitleBar = () => (
  <header className="flex h-[34px] shrink-0 flex-col justify-between bg-linear-to-b from-[#90b0ca] to-[#eaf1f7]">
    <div className="flex justify-between">
      <h1 className="pt-[3px] pl-[3px] leading-3 text-[#1d2a38]">SpatialMaster Pro 1.2</h1>
      <div className="flex h-[11px]">
        <button aria-label="最小化" className="flex w-[18px] items-center justify-center rounded-bl-xs border border-[#4d5b69] bg-linear-to-b from-[#8b98a5] to-[#4f5c68]">
          <span className="h-0.5 w-2 bg-white" />
        </button>
        <button aria-label="关闭窗口" className="flex w-[29px] items-center justify-center rounded-br-xs border border-[#8c2d22] bg-linear-to-b from-[#dd7263] to-[#c02a1b]">
          <svg viewBox="0 0 8 8" className="h-2 w-2" stroke="#fff" strokeWidth="1.600" aria-hidden="true">
            <path d="M1.500 1.500l5 5M6.500 1.500l-5 5" />
          </svg>
        </button>
      </div>
    </div>
    <nav className="flex h-[15px] border-b border-[#7f95a8] pl-0.5 text-[#111]">
      <button className="-mb-px flex h-[15px] w-[34px] items-center justify-center border border-b-0 border-[#8fa5b8] bg-white">文件</button>
      <div className="flex w-[276px]">
        {["开始", "特征构造", "仪器", "配准", "关系特征", "GD&T", "分析报告", "帮助"].map((t) => (
          <button key={t} className="flex flex-1 items-center justify-center whitespace-nowrap">
            {t}
          </button>
        ))}
      </div>
    </nav>
  </header>
);

const StatusBar = () => (
  <footer className="flex h-4 shrink-0 items-center bg-[#eeecec] text-[#111]">
    <p className="w-[768px] pl-px">选择特征个数错误,请重新选择...</p>
    <p className="w-24">软件版本:1.1</p>
    <div className="h-3 w-[37px] bg-[#00f400]" />
    <div className="flex-1" />
    <button className="h-[13px] w-[25px] border border-[#8a8a8a] bg-[#f6f6f6] leading-[11px]">mm</button>
    <label htmlFor="posX" className="w-4 pl-1">
      X:
    </label>
    <input id="posX" defaultValue="1234.567" className="mr-[135px] h-[13px] w-[50px] border border-[#8a8a8a] bg-white px-px" />
  </footer>
);

const Watermark = () => (
  <div className="pointer-events-none absolute right-0 bottom-0 h-[120px] w-[354px]">
    <svg viewBox="850 536 354 120" className="h-full w-full" aria-hidden="true">
      <g fill="#f0707f" opacity=".4">
        <path d="M874 537h14.500v7H910v43.500h-14V557h-22z" />
        <path d="M851 557h14.500v30.500H888v20h-14v-7h-23z" />
      </g>
      <text x="923" y="601" className="fill-[#7f8ba3] font-['Lato',sans-serif] text-[60px] font-black" opacity=".4">
        CHOTEST
      </text>
      <path d="M1054 620h8v-5h9v5h4v20h-4v-5h-17zM1058 624v7h5v-7z" fill="#7f8ba3" fillRule="evenodd" opacity=".4" />
      <path d="M1198 593h4v19h-4z" fill="#4a4a4a" />
      <path d="M1199 612h3v17h-3z" fill="#3c8f57" />
      <path d="M1070 614h127v37h-127z" fill="#fff" />
      <text x="1080" y="638" className="fill-black font-['Noto_Sans',sans-serif] text-[16px]">
        Gaosupcb.com
      </text>
    </svg>
  </div>
);

export default function App() {
  return (
    <div className="relative h-screen min-h-[656px] overflow-hidden bg-white px-0.5 pt-px pb-0.5 font-['Noto_Sans','Noto_Sans_CJK_SC',sans-serif] text-[8px] leading-3">
      <div className="flex h-full flex-col border border-[#6d8499] bg-[#bcd0e2]">
        <TitleBar />
        <div className="flex min-h-0 flex-1 flex-col pl-0.5">
          <Ribbon />
          <main className="flex min-h-0 flex-1">
            <WorkTree />
            <div className="flex min-w-0 flex-1 flex-col">
              <Viewport />
              <Report />
            </div>
            <Toolbox />
          </main>
          <StatusBar />
        </div>
      </div>
      <Watermark />
    </div>
  );
}
